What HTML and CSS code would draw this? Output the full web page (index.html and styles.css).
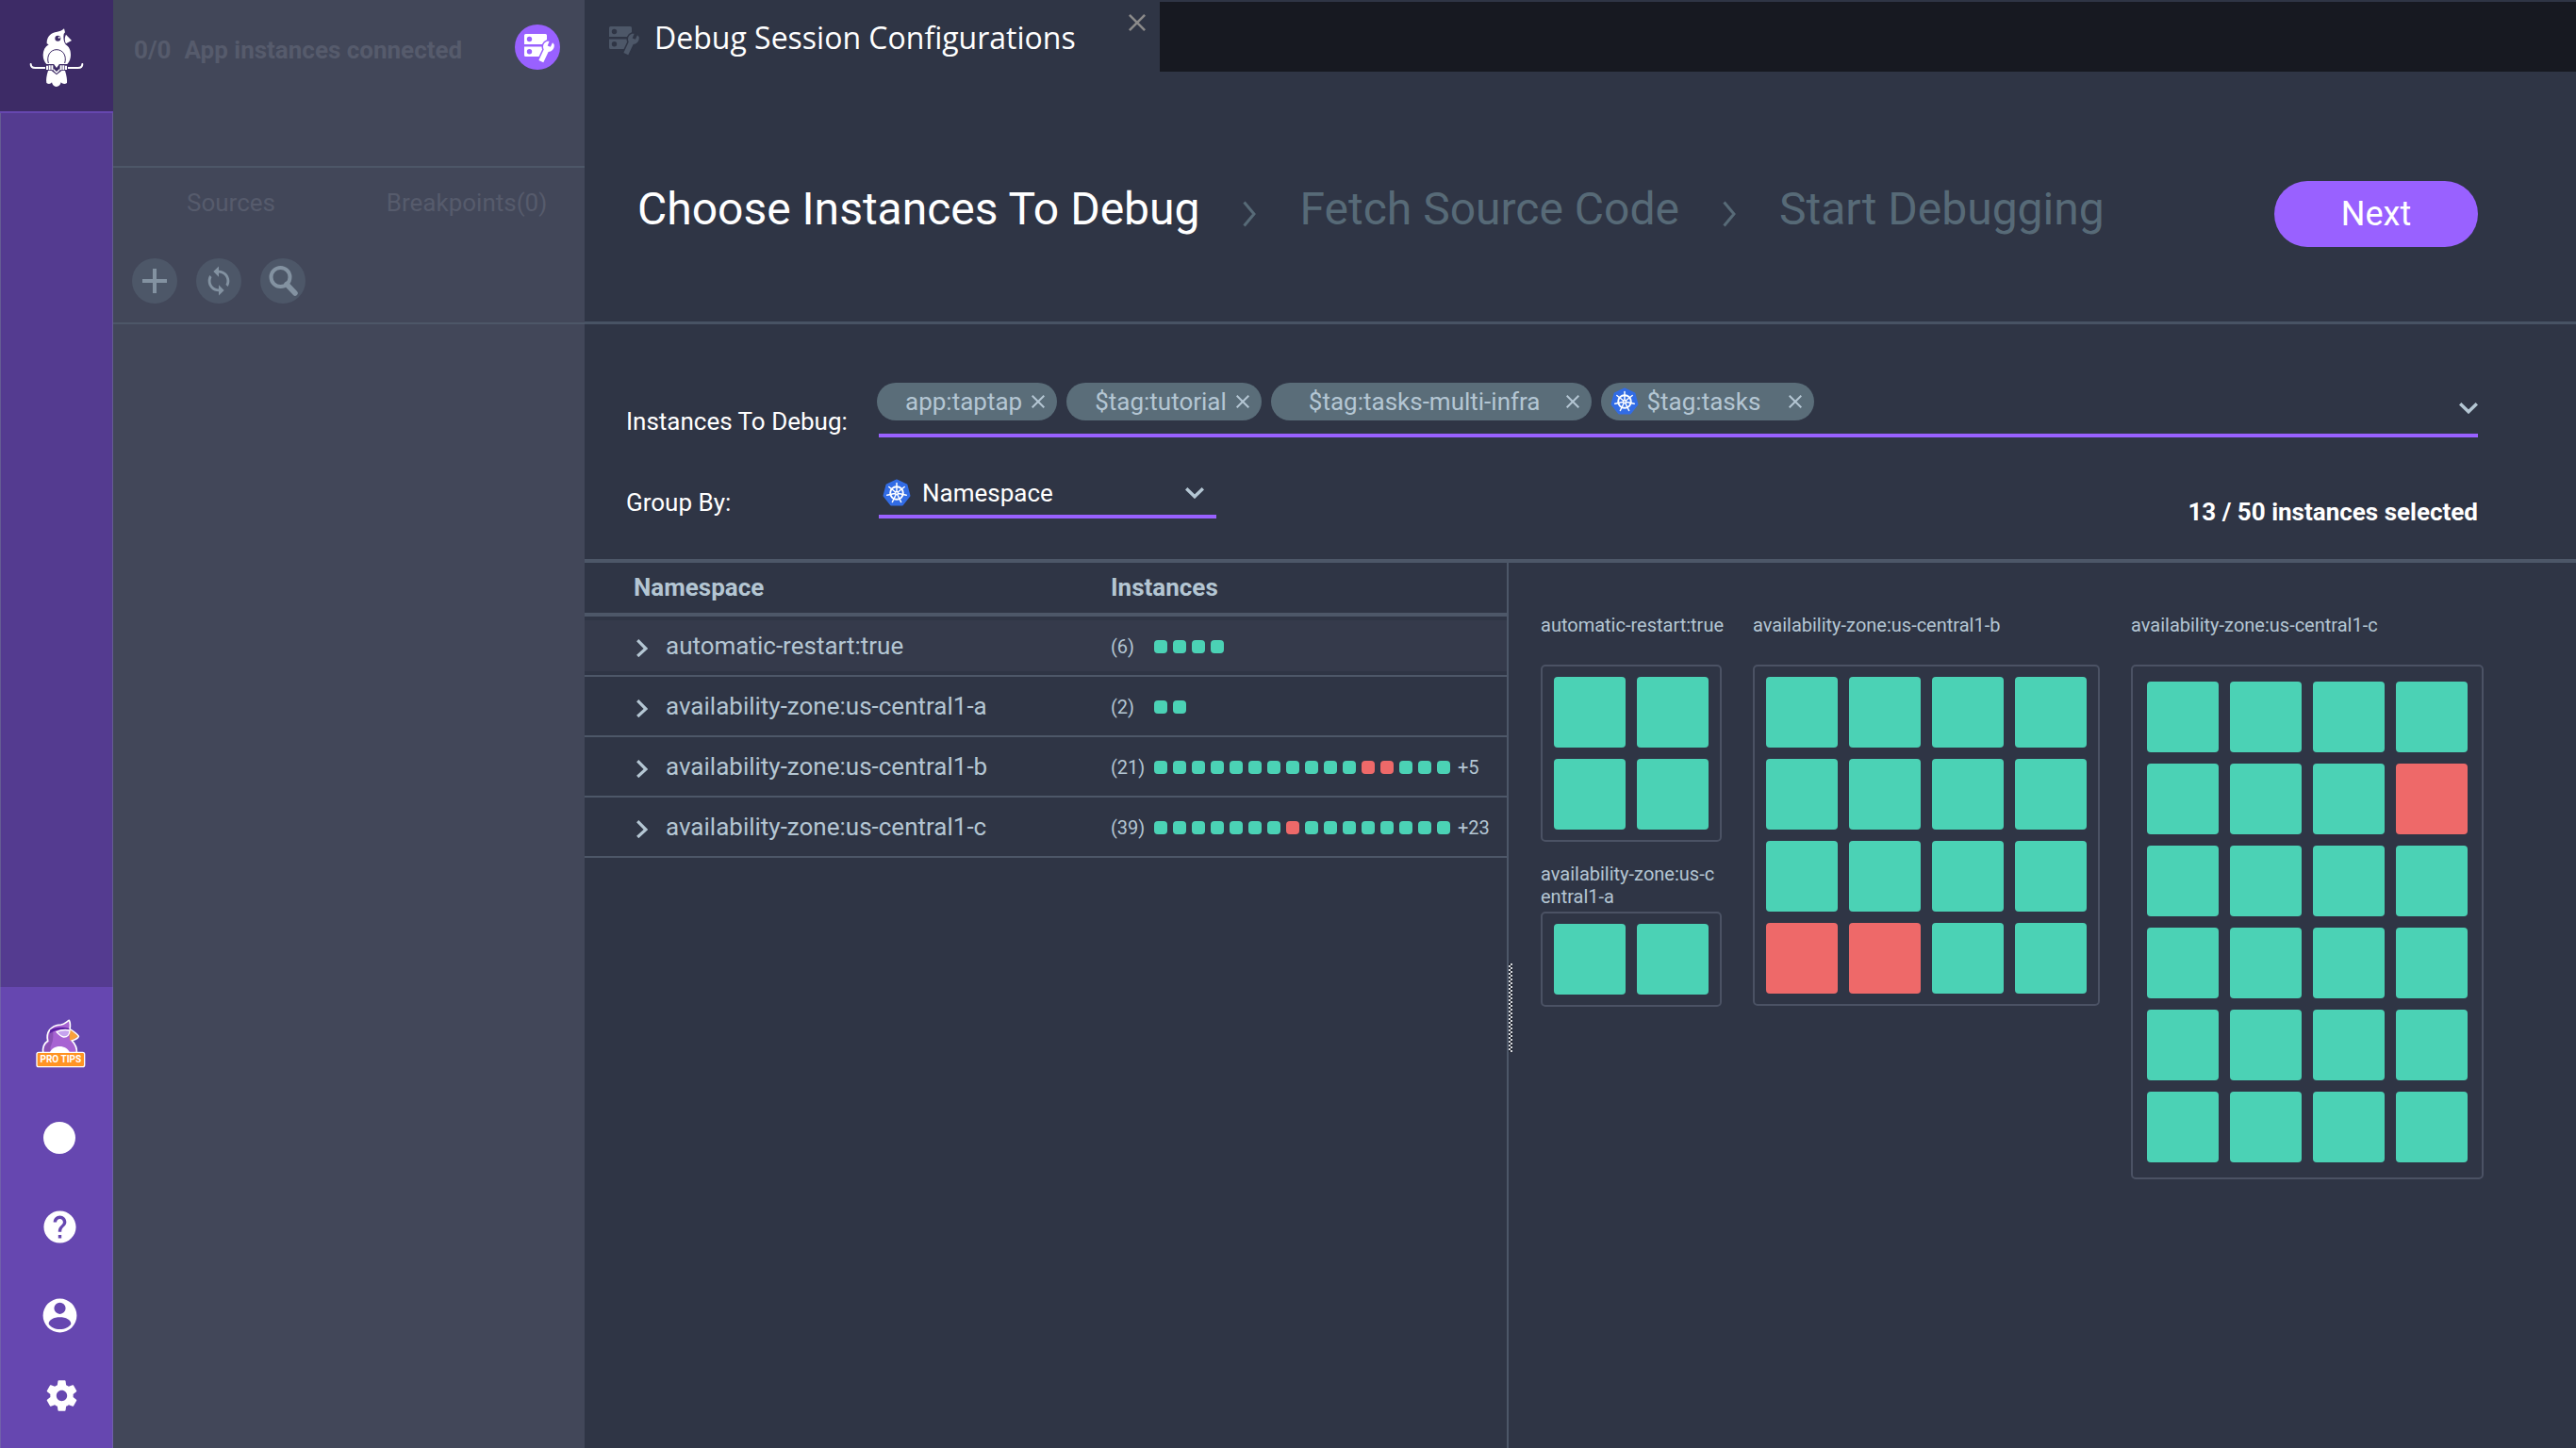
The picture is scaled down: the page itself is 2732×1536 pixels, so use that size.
FILE: index.html
```html
<!DOCTYPE html>
<html lang="en">
<head>
<meta charset="utf-8">
<title>Debug Session Configurations</title>
<link rel="stylesheet" href="styles.css">
</head>
<body>
<svg class="sprite" aria-hidden="true">
  <symbol id="i-server" viewBox="0 0 32 32">
    <path fill="currentColor" fill-rule="evenodd" d="M1.500 0H22.500A1.500 1.500 0 0 1 24 1.500V11H0V1.500A1.500 1.500 0 0 1 1.500 0ZM5.500 2.800a2.700 2.700 0 1 0 0 5.400a2.700 2.700 0 0 0 0-5.400ZM0 13.500H24V24H1.500A1.500 1.500 0 0 1 0 22.500ZM5.500 16a2.700 2.700 0 1 0 0 5.400a2.700 2.700 0 0 0 0-5.400Z"/>
    <path fill="currentColor" stroke="var(--icon-bg)" stroke-width="3" paint-order="stroke" d="M24.300 7.800C20.500 9 19 13 20.700 16.600L15.400 27.900L20.300 30.200L25.600 19.100C29.500 18.800 32.600 15 31.600 11L30 9.200L27.800 13.800L24.700 12.400L26.600 7.800Z"/>
  </symbol>
  <symbol id="i-k8s" viewBox="0 0 30 30">
    <path fill="#326ce5" stroke="#326ce5" stroke-width="2" stroke-linejoin="round" d="M15 1.500L25.500 6.500L28.500 18L21 27.500H9L1.500 18L4.500 6.500Z"/>
    <g fill="none" stroke="#fff" stroke-width="1.500" stroke-linecap="round">
      <circle cx="15" cy="15" r="6.800" stroke-width="1.900"/>
      <path d="M15 4.500V15M23.200 8.500L15 15M25.200 17.300L15 15M19.600 24.500L15 15M10.400 24.500L15 15M4.800 17.300L15 15M6.800 8.500L15 15"/>
    </g>
    <circle cx="15" cy="15" r="2" fill="#fff"/><circle cx="15" cy="15" r=".8" fill="#326ce5"/>
  </symbol>
  <symbol id="i-x" viewBox="0 0 14 14"><path fill="none" stroke="currentColor" stroke-width="2" d="M.700 .700L13.300 13.300M13.300 .700L.700 13.300"/></symbol>
  <symbol id="i-down" viewBox="0 0 20 12"><path fill="none" stroke="currentColor" stroke-width="3.400" d="M1.200 1.200L10 9.800L18.800 1.200"/></symbol>
  <symbol id="i-right" viewBox="0 0 12 24"><path fill="none" stroke="currentColor" stroke-width="3.200" d="M1.200 6.200L10 15L1.200 23"/></symbol>
  <symbol id="i-step" viewBox="0 0 14 28"><path fill="none" stroke="currentColor" stroke-width="3" d="M1.500 1.500L12 14L1.500 26.500"/></symbol>
</svg>

<nav class="rail" aria-label="Main">
  <a class="rail-logo" href="#" aria-label="Home">
    <svg width="80" height="85" viewBox="0 0 240 255">
      <g fill="#fff">
        <path d="M144 40C136 47 130 49 122 50C102 52 89 66 89 84V88L95 91C83 98 77 110 77 124C77 138 82 147 88 153H154C161 146 165 136 165 124C165 108 160 98 149 91C142 82 141 68 143 57L147 52Z"/>
        <path d="M150 59L168 78L150 88C145 80 145 67 150 59Z"/>
        <path d="M93 174C88 190 86 203 88 213C94 218 101 217 105 211C106 219 112 225 119 225C127 225 133 219 134 211C139 217 147 218 153 213C154 203 152 190 147 174Z"/>
      </g>
      <circle cx="124" cy="71" r="9" fill="#3d2b66"/><circle cx="128" cy="68" r="3" fill="#fff"/>
      <path d="M94 150C87 126 101 107 120 107C140 107 153 126 146 150" fill="none" stroke="#3d2b66" stroke-width="3"/>
      <path d="M38 153C38 161 44 165 52 165H86M154 165H188C196 165 202 161 202 153" fill="none" stroke="#fff" stroke-width="6" stroke-linecap="round"/>
      <path d="M84 154H108L120 169L132 154H156V174H136L120 187L104 174H84Z" fill="#3d2b66"/>
      <path d="M87 158h6v13h-6zM95 157h6v15h-6zM103 157h6v15h-6zM131 157h6v15h-6zM139 157h6v15h-6zM147 158h6v13h-6zM109 150H131L120 165ZM110 167L120 177L130 167V173L120 183L110 173Z" fill="#fff"/>
    </svg>
  </a>
  <div class="rail-body"></div>
  <div class="rail-menu">
    <button class="rail-item rail-tips" aria-label="Pro tips">
      <svg width="54" height="52" viewBox="0 0 162 156">
        <path d="M23 108C21 88 25 78 38 70C32 45 44 20 80 18C92 16 98 8 106 4C110 12 110 22 108 32C118 38 130 46 136 55C132 64 124 66 114 68C124 78 132 88 130 108Z" fill="#a763d2" stroke="#fff" stroke-width="5" stroke-linejoin="round"/>
        <path d="M27 106C24 90 30 80 44 72C38 56 42 42 54 32C56 50 56 66 50 80C44 90 46 98 50 106Z" fill="#8a51b5"/>
        <path d="M46 34C60 24 90 24 106 30L107 36C86 30 62 34 44 46Z" fill="#5b1fa3"/>
        <path d="M107 34C118 40 128 48 134 55C128 62 118 66 108 68Z" fill="#f9a13a"/>
        <path d="M66 41C80 34 98 34 108 36C108 50 100 58 88 57C78 55 72 48 66 41Z" fill="#c6a3ee" stroke="#fff" stroke-width="4"/>
        <path d="M44 108C52 80 100 80 108 108Z" fill="#fff"/>
        <rect x="3" y="106" width="152" height="46" rx="6" fill="#ff9423" stroke="#fff" stroke-width="4"/>
        <text x="79" y="139" text-anchor="middle" class="tips-text">PRO TIPS</text>
      </svg>
    </button>
    <button class="rail-item" aria-label="Status"><svg width="34" height="34" viewBox="0 0 34 34"><circle cx="17" cy="17" r="17" fill="#fff"/></svg></button>
    <button class="rail-item" aria-label="Help"><svg width="41" height="41" viewBox="0 0 24 24"><path fill="#fff" d="M12 2C6.480 2 2 6.480 2 12s4.480 10 10 10 10-4.480 10-10S17.520 2 12 2zm1 17h-2v-2h2v2zm2.070-7.750l-.9.920C13.450 12.900 13 13.500 13 15h-2v-.5c0-1.100.45-2.100 1.170-2.830l1.240-1.260c.37-.36.590-.86.590-1.410 0-1.100-.9-2-2-2s-2 .9-2 2H8c0-2.210 1.790-4 4-4s4 1.790 4 4c0 .88-.36 1.680-.93 2.250z"/></svg></button>
    <button class="rail-item" aria-label="Account"><svg width="43" height="43" viewBox="0 0 24 24"><path fill="#fff" fill-rule="evenodd" d="M12 2a10 10 0 1 0 0 20a10 10 0 0 0 0-20ZM12 4.300a3.400 3.400 0 1 1 0 6.800a3.400 3.400 0 0 1 0-6.800ZM12 20.100C9 20.100 6.600 18.900 5.400 17C5.300 14.500 8.500 13 12 13S18.700 14.500 18.600 17C17.400 18.900 15 20.100 12 20.100Z"/></svg></button>
    <button class="rail-item rail-settings" aria-label="Settings"><svg width="39" height="39" viewBox="0 0 24 24"><path fill="#fff" d="M19.430 12.980c.04-.32.07-.64.07-.98s-.03-.66-.07-.98l2.110-1.650c.19-.15.24-.42.120-.64l-2-3.460c-.12-.22-.39-.3-.61-.22l-2.490 1c-.52-.4-1.080-.73-1.690-.98l-.38-2.650C14.460 2.180 14.250 2 14 2h-4c-.25 0-.46.18-.49.420l-.38 2.650c-.61.250-1.170.590-1.690.980l-2.490-1c-.23-.09-.49 0-.61.220l-2 3.460c-.13.220-.07.490.12.640l2.110 1.650c-.04.320-.07.650-.07.980s.03.660.07.980l-2.110 1.650c-.19.150-.24.420-.12.640l2 3.460c.12.220.39.300.61.220l2.490-1c.52.400 1.080.730 1.690.980l.38 2.650c.03.240.24.420.49.420h4c.25 0 .46-.18.49-.42l.38-2.650c.61-.25 1.170-.59 1.690-.98l2.490 1c.23.090.49 0 .61-.22l2-3.460c.12-.22.07-.49-.12-.64l-2.110-1.650zM12 15.500c-1.930 0-3.500-1.570-3.500-3.500s1.570-3.500 3.500-3.500 3.500 1.570 3.500 3.500-1.570 3.500-3.500 3.500z"/></svg></button>
  </div>
</nav>

<aside class="panel">
  <header class="panel-head">
    <p class="panel-status"><span>0/0</span><span>App instances connected</span></p>
    <button class="setup-btn" aria-label="Configure instances"><svg width="32" height="32"><use href="#i-server"/></svg></button>
  </header>
  <div class="panel-tools">
    <div class="panel-tabs"><button>Sources</button><button>Breakpoints(0)</button></div>
    <div class="tool-row">
      <button class="tool" aria-label="Add source"><svg width="26" height="26" viewBox="0 0 26 26"><path d="M13 0V26M0 13H26" stroke="currentColor" stroke-width="4"/></svg></button>
      <button class="tool" aria-label="Sync"><svg width="34" height="34" viewBox="0 0 24 24"><path fill="currentColor" d="M12 4V1L8 5l4 4V6c3.310 0 6 2.690 6 6 0 1.010-.25 1.970-.7 2.800l1.460 1.460C19.540 15.030 20 13.570 20 12c0-4.420-3.580-8-8-8zm0 14c-3.310 0-6-2.690-6-6 0-1.010.250-1.970.7-2.800L5.240 7.740C4.460 8.970 4 10.430 4 12c0 4.420 3.580 8 8 8v3l4-4-4-4v3z"/></svg></button>
      <button class="tool" aria-label="Search"><svg width="32" height="34" viewBox="0 0 32 34" fill="none" stroke="currentColor"><circle cx="13.500" cy="13" r="10" stroke-width="4"/><path d="M20 20.500L29 30" stroke-width="5.500" stroke-linecap="round"/></svg></button>
    </div>
  </div>
</aside>

<main class="main">
  <div class="tabbar">
    <div class="tab">
      <svg class="tab-icon" width="32" height="32"><use href="#i-server"/></svg>
      <span class="tab-title">Debug Session Configurations</span>
      <button class="tab-close" aria-label="Close tab"><svg width="18" height="18"><use href="#i-x"/></svg></button>
    </div>
    <div class="tab-space"></div>
  </div>

  <header class="wizard">
    <ol class="steps">
      <li class="current" aria-current="step">Choose Instances To Debug</li>
      <li class="sep" aria-hidden="true"><svg width="14" height="28"><use href="#i-step"/></svg></li>
      <li>Fetch Source Code</li>
      <li class="sep" aria-hidden="true"><svg width="14" height="28"><use href="#i-step"/></svg></li>
      <li>Start Debugging</li>
    </ol>
    <button class="next">Next</button>
  </header>

  <form class="filters">
    <div class="field-row">
      <label class="field-label" for="instances">Instances To Debug:</label>
      <div class="field">
        <ul class="chips">
          <li class="chip">app:taptap<button type="button" aria-label="Remove app:taptap"><svg width="14" height="14"><use href="#i-x"/></svg></button></li>
          <li class="chip">$tag:tutorial<button type="button" aria-label="Remove $tag:tutorial"><svg width="14" height="14"><use href="#i-x"/></svg></button></li>
          <li class="chip chip-wide">$tag:tasks-multi-infra<button type="button" aria-label="Remove $tag:tasks-multi-infra"><svg width="14" height="14"><use href="#i-x"/></svg></button></li>
          <li class="chip chip-wide chip-k8s"><svg width="30" height="30"><use href="#i-k8s"/></svg>$tag:tasks<button type="button" aria-label="Remove $tag:tasks"><svg width="14" height="14"><use href="#i-x"/></svg></button></li>
        </ul>
        <input class="chip-input" id="instances" type="text">
        <button type="button" class="chip-open" aria-label="Show options"><svg width="20" height="12"><use href="#i-down"/></svg></button>
      </div>
    </div>
    <div class="field-row group-row">
      <label class="field-label" for="group">Group By:</label>
      <div class="field select-field">
        <svg width="30" height="30"><use href="#i-k8s"/></svg>
        <select id="group"><option>Namespace</option></select>
        <svg width="20" height="12"><use href="#i-down"/></svg>
      </div>
      <output class="selected" for="instances">13 / 50 instances selected</output>
    </div>
  </form>

  <div class="results">
    <section class="groups">
      <table>
        <thead><tr><th class="col-name">Namespace</th><th>Instances</th></tr></thead>
        <tbody>
          <tr class="active"><td><button class="expand"><svg width="12" height="24"><use href="#i-right"/></svg>automatic-restart:true</button></td>
            <td><div class="dots"><span class="count">(6)</span><i></i><i></i><i></i><i></i></div></td></tr>
          <tr><td><button class="expand"><svg width="12" height="24"><use href="#i-right"/></svg>availability-zone:us-central1-a</button></td>
            <td><div class="dots"><span class="count">(2)</span><i></i><i></i></div></td></tr>
          <tr><td><button class="expand"><svg width="12" height="24"><use href="#i-right"/></svg>availability-zone:us-central1-b</button></td>
            <td><div class="dots"><span class="count">(21)</span><i></i><i></i><i></i><i></i><i></i><i></i><i></i><i></i><i></i><i></i><i></i><i class="bad"></i><i class="bad"></i><i></i><i></i><i></i><span class="more">+5</span></div></td></tr>
          <tr><td><button class="expand"><svg width="12" height="24"><use href="#i-right"/></svg>availability-zone:us-central1-c</button></td>
            <td><div class="dots"><span class="count">(39)</span><i></i><i></i><i></i><i></i><i></i><i></i><i></i><i class="bad"></i><i></i><i></i><i></i><i></i><i></i><i></i><i></i><i></i><span class="more">+23</span></div></td></tr>
        </tbody>
      </table>
    </section>
    <section class="map">
      <div class="grip"></div>
      <div class="map-col narrow">
        <h3 class="single">automatic-restart:true</h3>
        <div class="tiles"><i></i><i></i><i></i><i></i></div>
        <h3 class="wrapped">availability-zone:us-central1-a</h3>
        <div class="tiles"><i></i><i></i></div>
      </div>
      <div class="map-col">
        <h3 class="single">availability-zone:us-central1-b</h3>
        <div class="tiles four"><i></i><i></i><i></i><i></i><i></i><i></i><i></i><i></i><i></i><i></i><i></i><i></i><i class="bad"></i><i class="bad"></i><i></i><i></i></div>
      </div>
      <div class="map-col">
        <h3 class="single">availability-zone:us-central1-c</h3>
        <div class="tiles four roomy"><i></i><i></i><i></i><i></i><i></i><i></i><i></i><i class="bad"></i><i></i><i></i><i></i><i></i><i></i><i></i><i></i><i></i><i></i><i></i><i></i><i></i><i></i><i></i><i></i><i></i></div>
      </div>
    </section>
  </div>
</main>
</body>
</html>
```
FILE: styles.css
```css
:root {
  --bg: #2f3545;
  --panel: #424759;
  --line: #4d5768;
  --text: #b4c6d3;
  --muted: #576a77;
  --purple: #9961ff;
  --green: #4bd2b5;
  --red: #ee6969;
}
* { box-sizing: border-box; }
body {
  margin: 0;
  min-height: 100vh;
  display: flex;
  background: var(--bg);
  color: #fff;
  font: 26px/32px Roboto, "Liberation Sans", sans-serif;
}
button, select, input {
  font: inherit;
  color: inherit;
  background: none;
  border: 0;
  padding: 0;
  margin: 0;
}
svg { display: block; flex: none; }
ul, ol { list-style: none; margin: 0; padding: 0; }
p, h3 { margin: 0; }
.sprite { position: absolute; width: 0; height: 0; }

/* Left rail */
.rail { flex: 0 0 120px; display: flex; flex-direction: column; }
.rail-logo {
  height: 120px;
  display: flex;
  align-items: center;
  justify-content: center;
  background: #3d2b66;
  border-bottom: 2px solid #6647b0;
}
.rail-body { flex: 1; background: #543b90; border: solid #655c93; border-width: 0 1px; }
.rail-menu {
  display: flex;
  flex-direction: column;
  align-items: center;
  gap: 54px;
  padding: 34px 0 36px 6px;
  background: #6647b0;
  border: solid #7060ab;
  border-width: 0 1px;
}
.rail-item { height: 40px; display: flex; align-items: center; justify-content: center; }
.rail-tips { height: 52px; padding-left: 4px; }
.rail-settings { margin: -9px 0 0 5px; }
.tips-text { font: bold 30px Roboto, sans-serif; fill: #fff; }

/* Sources panel */
.panel { flex: 0 0 500px; background: var(--panel); color: #565b6c; }
.panel-head {
  height: 178px;
  display: flex;
  justify-content: space-between;
  align-items: flex-start;
  padding: 26px 26px 0 22px;
  border-bottom: 2px solid var(--line);
}
.panel-status { display: flex; gap: 14px; padding-top: 11px; font-weight: bold; white-space: nowrap; }
.setup-btn {
  --icon-bg: var(--purple);
  width: 48px;
  height: 48px;
  padding: 4px 0 0 4px;
  border-radius: 50%;
  background: var(--purple);
  color: #fff;
  display: flex;
  align-items: center;
  justify-content: center;
}
.panel-tools { padding: 21px 0 20px; border-bottom: 2px solid var(--line); }
.panel-tabs { display: grid; grid-template-columns: 1fr 1fr; }
.tool-row { display: flex; gap: 20px; padding: 43px 20px 0; }
.tool {
  width: 48px;
  height: 48px;
  border-radius: 50%;
  background: var(--line);
  color: #8392a1;
  display: flex;
  align-items: center;
  justify-content: center;
}

/* Main */
.main { flex: 1; min-width: 0; display: flex; flex-direction: column; }
.tabbar { display: flex; height: 76px; padding-top: 2px; }
.tab {
  flex: 0 0 610px;
  display: flex;
  align-items: flex-start;
  padding: 0 15px 0 26px;
  font: 32px/40px "Open Sans", "Noto Sans", sans-serif;
}
.tab-icon { --icon-bg: var(--bg); color: var(--line); margin-top: 26px; }
.tab-title { flex: 1; padding: 18px 0 0 16px; white-space: nowrap; }
.tab-close { color: #8b8a8a; margin-top: 13px; }
.tab-space { flex: 1; background: #171921; }

.wizard {
  display: flex;
  justify-content: space-between;
  align-items: flex-start;
  padding: 116px 104px 79px 56px;
  border-bottom: 3px solid #485364;
}
.steps { display: flex; gap: 46px; padding-top: 2px; font-size: 48px; line-height: 56px; color: var(--muted); white-space: nowrap; }
.steps .current { color: #fff; }
.sep { padding-top: 19px; }
.next { width: 216px; height: 70px; border-radius: 35px; background: var(--purple); font-size: 36px; line-height: 40px; }

.filters { padding: 62px 104px 34px 44px; border-bottom: 4px solid var(--line); }
.field-row { display: grid; grid-template-columns: 268px 1fr; }
.field-label { padding-top: 25px; }
.field { display: flex; border-bottom: 4px solid var(--purple); height: 58px; }
.chips { display: flex; gap: 10px; margin-left: -2px; color: var(--text); }
.chip {
  display: flex;
  align-items: center;
  gap: 10px;
  height: 40px;
  padding: 0 13px 0 30px;
  border-radius: 20px;
  background: #5a6d79;
  white-space: nowrap;
}
.chip-wide { padding-left: 40px; gap: 28px; }
.chip-k8s { padding-left: 10px; gap: 8px; }
.chip-k8s button { margin-left: 22px; }
.chip-input { flex: 1; min-width: 0; outline: 0; }
.chip-open, .select-field { color: var(--text); }
.chip-open { height: 54px; }
.group-row { grid-template-columns: 268px 358px 1fr; padding-top: 36px; }
.group-row .field-label { padding-top: 17px; }
.select-field { height: 50px; align-items: center; padding: 0 13px 0 4px; gap: 12px; }
.select-field select { flex: 1; appearance: none; color: #fff; }
.selected { padding-top: 27px; text-align: right; font-weight: bold; }

.results { flex: 1; display: flex; }
.groups { flex: 0 0 980px; border-right: 2px solid var(--line); color: var(--text); }
table { width: 100%; border-spacing: 0; table-layout: fixed; }
th { padding: 10px 0 11px; text-align: left; border-bottom: 4px solid var(--line); }
.col-name { width: 558px; padding-left: 52px; }
td { padding: 15px 0; border-bottom: 2px solid var(--line); }
td:first-child { padding-left: 55px; }
.active { background: linear-gradient(#353a4b, #353a4b) 0 4px / 100% 54px no-repeat; }
.expand { display: flex; align-items: center; gap: 19px; white-space: nowrap; }
.dots { display: flex; align-items: center; gap: 6px; padding-top: 2px; font-size: 20px; line-height: 30px; }
.dots i { width: 14px; height: 14px; border-radius: 4px; background: var(--green); }
.count { width: 40px; }
.more { padding-left: 2px; }

.map {
  flex: 1;
  position: relative;
  display: flex;
  align-items: flex-start;
  gap: 33px;
  padding: 54px 0 0 34px;
  color: var(--text);
}
.grip {
  position: absolute;
  left: 0;
  top: 425px;
  width: 4px;
  height: 94px;
  background: repeating-conic-gradient(#d8dade 0 25%, #20242f 0 50%) 0 0 / 4px 4px;
}
h3 { font-size: 20px; line-height: 24px; font-weight: normal; }
.single { white-space: nowrap; padding-bottom: 30px; }
.wrapped { word-break: break-all; padding: 22px 0 4px; }
.narrow { width: 192px; }
.tiles {
  display: grid;
  grid-template-columns: repeat(2, 76px);
  grid-auto-rows: 75px;
  gap: 12px;
  padding: 11px 12px;
  border: 2px solid #4b5264;
  border-radius: 5px;
}
.four { grid-template-columns: repeat(4, 76px); }
.roomy { padding: 16px 15px; }
.tiles i { border-radius: 4px; background: var(--green); }
.dots .bad, .tiles .bad { background: var(--red); }
```
